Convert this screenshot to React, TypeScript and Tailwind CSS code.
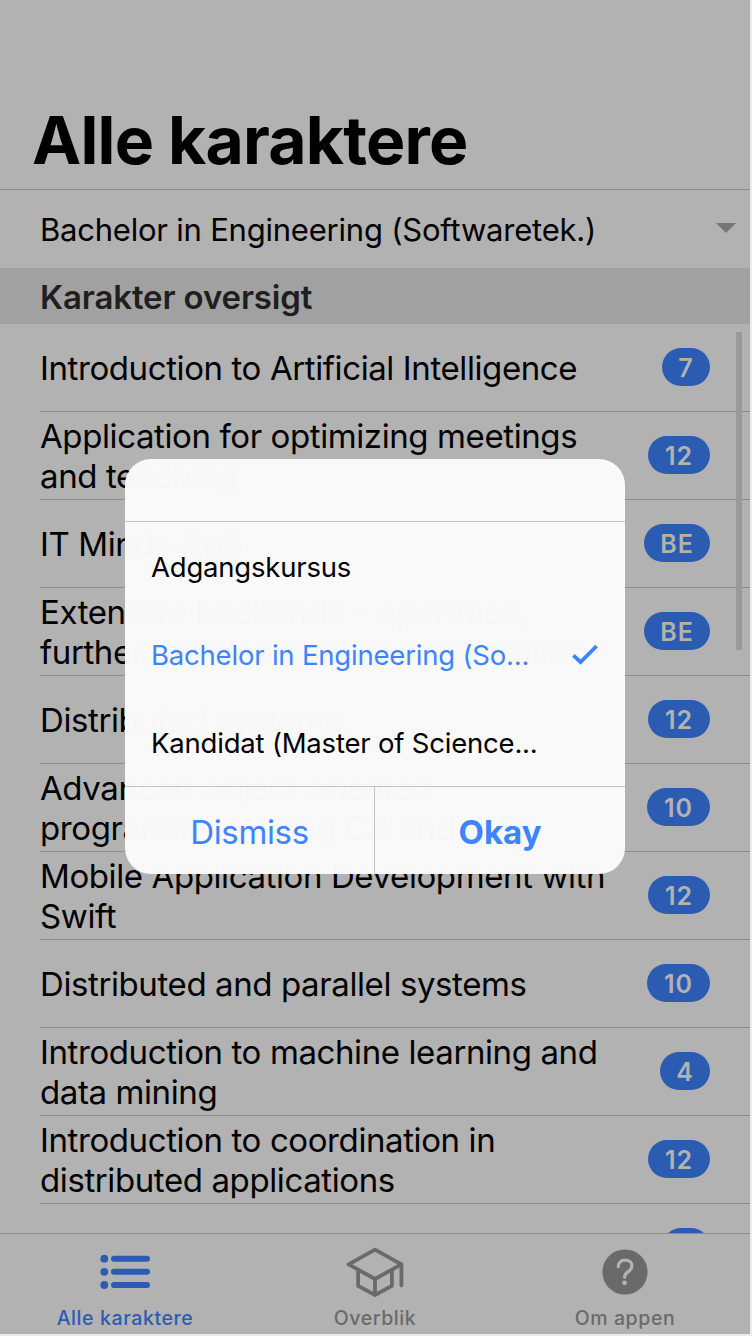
type Grade = { lines: string[]; grade: string; width: string };

const grades: Grade[] = [
  { lines: ["Introduction to Artificial Intelligence"], grade: "7", width: "w-[48px]" },
  { lines: ["Application for optimizing meetings", "and teaching"], grade: "12", width: "w-[62px]" },
  { lines: ["IT Minds ApS"], grade: "BE", width: "w-[66px]" },
  { lines: ["Extensive backends - operation,", "further development and integration"], grade: "BE", width: "w-[66px]" },
  { lines: ["Distributed systems"], grade: "12", width: "w-[62px]" },
  { lines: ["Advanced object oriented", "programming using C# and .NET"], grade: "10", width: "w-[63px]" },
  { lines: ["Mobile Application Development with", "Swift"], grade: "12", width: "w-[62px]" },
  { lines: ["Distributed and parallel systems"], grade: "10", width: "w-[63px]" },
  { lines: ["Introduction to machine learning and", "data mining"], grade: "4", width: "w-[50px]" },
  { lines: ["Introduction to coordination in", "distributed applications"], grade: "12", width: "w-[62px]" },
];

function Badge({ text, width }: { text: string; width: string }) {
  return (
    <span className={`${width} flex h-[38px] shrink-0 items-center justify-center rounded-full bg-[#2b5cb2] pt-[2px] text-[25px] leading-[30px] font-semibold tracking-[0.9px] text-[#b2b2b2]`}>
      {text}
    </span>
  );
}

function GradeRow({ lines, grade, width }: Grade) {
  return (
    <li className="ml-[40px] flex h-[88px] shrink-0 items-center justify-between border-b border-[#8c8c8c] pr-[40px]">
      <div className="pt-px text-[33px] leading-[40px] tracking-[-0.4px] whitespace-nowrap">
        {lines.map((line) => (
          <div key={line}>{line}</div>
        ))}
      </div>
      <div className="pb-px">
        <Badge text={grade} width={width} />
      </div>
    </li>
  );
}

function ListIcon() {
  return (
    <svg width="60" height="60" viewBox="0 0 60 60" fill="#2b5cb2">
      {[16.7, 29.8, 43].map((y) => (
        <g key={y}>
          <circle cx="9.3" cy={y} r="3.9" />
          <rect x="16" y={y - 3} width="39" height="6" rx="3" />
        </g>
      ))}
    </svg>
  );
}

function SchoolIcon() {
  return (
    <svg width="60" height="60" viewBox="0 0 60 60" fill="none" stroke="#6a6a6a" strokeWidth="3.8" strokeLinejoin="round" strokeLinecap="round">
      <path d="M30 7.6 3.6 22.3 30 37 56.4 22.3Z" />
      <path d="M13.1 28v15.8L30 53l16.9-9.2V28M30 37v16M56.4 22.3v21" />
    </svg>
  );
}

function HelpIcon() {
  return (
    <svg width="60" height="60" viewBox="0 0 60 60" fill="none">
      <circle cx="30" cy="30" r="22.6" fill="#6a6a6a" />
      <path d="M23.2 24.6c.2-4 2.9-6.4 6.9-6.4 4 0 6.8 2.4 6.8 5.8 0 2.5-1.2 4-3.6 5.7-2.7 1.8-3.7 3.1-3.7 5.5" stroke="#b2b2b2" strokeWidth="3.2" strokeLinecap="round" />
      <circle cx="29.5" cy="40.8" r="2.4" fill="#b2b2b2" />
    </svg>
  );
}

const tabs = [
  { label: "Alle karaktere", icon: <ListIcon />, color: "text-[#2b5cb2]" },
  { label: "Overblik", icon: <SchoolIcon />, color: "text-[#6a6a6a]" },
  { label: "Om appen", icon: <HelpIcon />, color: "text-[#6a6a6a]" },
];

function Picker() {
  return (
    <div role="dialog" className="absolute top-[459px] left-[125px] flex h-[415px] w-[500px] flex-col overflow-hidden rounded-[26px] bg-[rgb(249_249_249/0.994)]">
      <div className="h-[63px] shrink-0 border-b border-[#c4c4c4]" />
      <div className="flex h-[264px] shrink-0 flex-col pt-px pr-[27px] pl-[26px] text-[27.5px] leading-[34px] tracking-[-0.2px]">
        <div className="flex h-[88px] shrink-0 items-center">Adgangskursus</div>
        <div className="flex h-[88px] shrink-0 items-center justify-between text-[#3d84ff]">
          <span>Bachelor in Engineering (So...</span>
          <svg width="26" height="22" viewBox="0 0 26 22" fill="none" stroke="#3d84ff" strokeWidth="3.8">
            <path d="M1.4 11.3 8.6 18 24.6 2" />
          </svg>
        </div>
        <div className="flex h-[87px] shrink-0 items-center pt-px">Kandidat (Master of Science...</div>
      </div>
      <div className="flex grow border-t border-[#c4c4c4] text-[33px] leading-[40px] text-[#3d84ff]">
        <button className="flex w-[250px] items-center justify-center border-r border-[#c4c4c4] pt-[3px] tracking-[-0.35px]">Dismiss</button>
        <button className="flex w-[250px] items-center justify-center pt-[3px] font-bold">Okay</button>
      </div>
    </div>
  );
}

export default function App() {
  return (
    <div className="h-[1336px] w-[752px] overflow-hidden bg-[#ececec] font-['Inter',sans-serif]">
      <div className="relative flex h-[1334px] w-[750px] flex-col bg-[#b2b2b2] text-black">
        <header className="flex h-[190px] shrink-0 items-end border-b border-[#8c8c8c] pb-[9px] pl-[32px]">
          <h1 className="text-[66px] leading-[80px] font-bold tracking-[-0.8px]">Alle karaktere</h1>
        </header>
        <div className="flex h-[78px] shrink-0 items-center justify-between pr-[14px] pl-[40px]">
          <span className="pt-[2px] text-[31px] leading-[40px] tracking-[-0.22px]">Bachelor in Engineering (Softwaretek.)</span>
          <svg width="20" height="10" viewBox="0 0 20 10" fill="#757575" className="mb-[2px]">
            <path d="M0 0h20L10 10Z" />
          </svg>
        </div>
        <h2 className="flex h-[56px] shrink-0 items-center bg-[#a1a1a1] pt-[2px] pl-[40px] text-[33px] leading-[40px] font-semibold tracking-[-0.15px] text-[#1f1f1f]">Karakter oversigt</h2>
        <ul className="flex h-[909px] shrink-0 flex-col overflow-hidden">
          {grades.map((g) => (
            <GradeRow key={g.lines[0]} {...g} />
          ))}
          <li className="flex shrink-0 justify-end pt-[24px] pr-[40px]">
            <Badge text="" width="w-[48px]" />
          </li>
        </ul>
        <nav className="flex grow border-t border-[#8c8c8c]">
          {tabs.map((tab) => (
            <div key={tab.label} className={`${tab.color} flex w-[250px] flex-col items-center pt-[8px] text-[19.5px] leading-[24px] font-medium tracking-[0.6px]`}>
              {tab.icon}
              <span className="mt-[4px]">{tab.label}</span>
            </div>
          ))}
        </nav>
        <div className="absolute top-[332px] right-[8px] h-[318px] w-[6px] bg-[#999999]" />
        <Picker />
      </div>
    </div>
  );
}
